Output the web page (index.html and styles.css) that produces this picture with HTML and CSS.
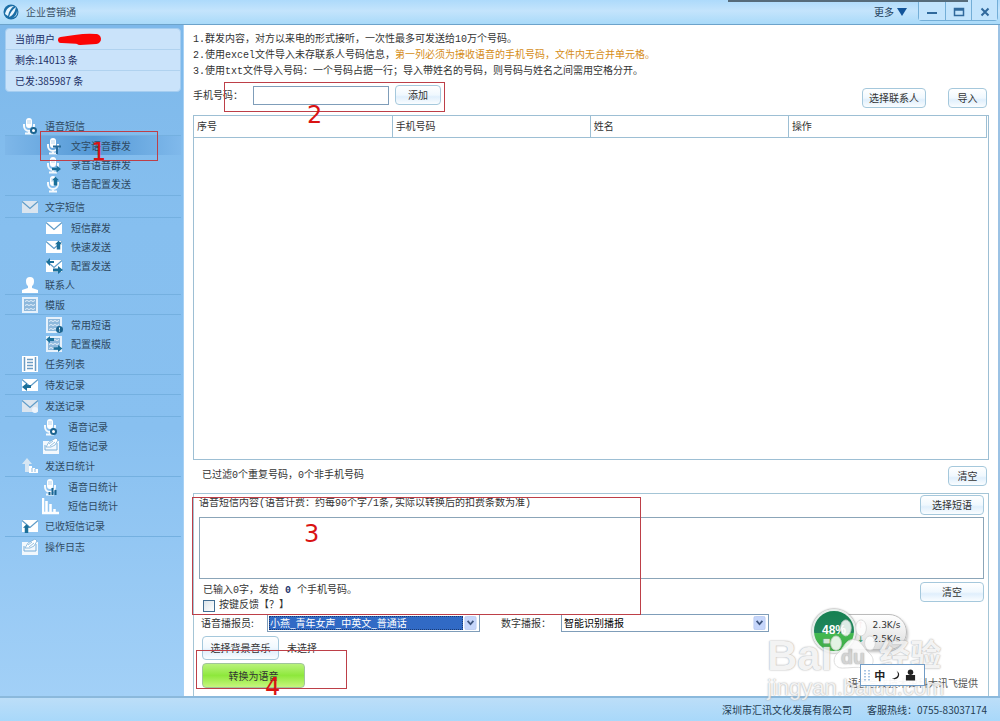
FILE: index.html
```html
<!DOCTYPE html>
<html lang="zh-CN">
<head>
<meta charset="utf-8">
<title>企业营销通</title>
<link rel="stylesheet" href="styles.css">
</head>
<body>
<svg class="defs" aria-hidden="true">
  <defs>
    <symbol id="mic" viewBox="0 0 18 18"><rect x="5" y="1" width="6" height="10" rx="3" fill="#fff"/><path d="M6 4h4M6 6h4" stroke="#b9d6ee"/><path d="M3 7v2a5 5 0 0 0 10 0V7M8 14v2M4 16.500h8" fill="none" stroke="#f4f9fd" stroke-width="2"/></symbol>
    <symbol id="mail" viewBox="0 0 18 18"><path d="M1 3h16v12H1z" fill="currentColor"/><path d="M1 3.500l8 7 8-7" fill="none" stroke="#5f9cc8" stroke-width="1.200"/></symbol>
    <symbol id="right" viewBox="0 0 10 8"><path d="M0 2.500h5V0l5 4-5 4V5.500H0z" fill="#1b6f99"/></symbol>
    <symbol id="up" viewBox="0 0 8 10"><path d="M4 0l4 4H6v6H2V4H0z" fill="#1b6f99"/></symbol>
    <symbol id="form" viewBox="0 0 18 18"><path d="M1 1h16v16H1z" fill="#e6f1fb"/><path d="M3 3h12v12H3z" fill="#8db8dc"/><path d="M4 5.500l2-1 2 1 2-1 2 1 2-1M4 9.500l2-1 2 1 2-1 2 1 2-1M4 13.500l2-1 2 1 2-1 2 1 2-1" fill="none" stroke="#e6f1fb"/></symbol>
    <symbol id="note" viewBox="0 0 18 18"><path d="M1 4h16v13H1z" fill="#f2f8fd"/><path d="M3 8v5h12V6" fill="none" stroke="#78aed8"/><path d="M4 10l3-5 7-4 2 2-3 5-4 2zM7 7l4-3M8 9l5-4" fill="#fff" stroke="#78aed8" stroke-width=".8"/></symbol>
    <symbol id="caret" viewBox="0 0 15 17"><rect x=".5" y=".5" width="14" height="16" rx="2" fill="#c6d6fb" stroke="#b5c7ef"/><path d="M4 6l3.500 4L11 6" fill="none" stroke="#3f567f" stroke-width="2.200"/></symbol>
  </defs>
</svg>
<div class="window">
  <header class="titlebar">
    <svg class="logo" viewBox="0 0 16 16"><circle cx="8" cy="8" r="7.500" fill="#1c6ea6"/><path d="M2 10C3 5 6 2 11 2 8 4 6 7 5 12zM6 13c1-4 3-7 7-10-1 4-2 8-7 10zM9 14c3-1 5-4 5-7 1 3-1 6-5 7z" fill="#e9f6ff"/></svg>
    <h1 class="app-name">企业营销通</h1>
    <button class="more" type="button">更多<svg viewBox="0 0 10 8"><path d="M0 0h10L5 8z" fill="#12549a"/></svg></button>
    <div class="controls">
      <button type="button" aria-label="最小化"><svg viewBox="0 0 12 10"><path d="M1 6h10" stroke="#30699c" stroke-width="2"/></svg></button>
      <button type="button" aria-label="最大化"><svg viewBox="0 0 12 10"><path d="M1.500 1.500h9v7h-9zM1 3h10" fill="none" stroke="#30699c" stroke-width="1.500"/></svg></button>
      <button type="button" aria-label="关闭"><svg viewBox="0 0 12 10"><path d="M2.500 1.500l7 7m0-7l-7 7" stroke="#30699c" stroke-width="2"/></svg></button>
    </div>
    <div class="edge"></div>
  </header>

  <div class="body">
    <aside class="sidebar">
      <div class="account">
        <p>当前用户<svg class="scribble" viewBox="0 0 48 13"><path d="M6 7L20 5Q33 3 40 4Q43 6 39 8L26 8L7 7" fill="none" stroke="#fb0404" stroke-width="6" stroke-linecap="round" stroke-linejoin="round"/><path d="M25 7L41 6" stroke="#fb0404" stroke-width="10" stroke-linecap="round"/></svg></p>
        <p>剩余:14013 条</p>
        <p>已发:385987 条</p>
      </div>
      <nav>
        <ul class="menu">
          <li><a class="head" href="#"><svg viewBox="0 0 18 18"><use href="#mic"/><circle cx="12.500" cy="13.500" r="2.500" fill="#fff" stroke="#1b6490" stroke-width="2"/></svg>语音短信</a>
            <ul class="sub ruled">
              <li><a class="active" href="#"><svg viewBox="0 0 18 18"><use href="#mic"/><path d="M8 9.500h8M12 9v8" stroke="#286b99" stroke-width="2"/></svg>文字语音群发</a></li>
              <li><a href="#"><svg viewBox="0 0 18 18"><use href="#mic"/><use href="#right" x="7" y="9" width="9" height="8"/></svg>录音语音群发</a></li>
              <li><a href="#"><svg viewBox="0 0 18 18"><use href="#mic"/><use href="#up" x="7" y="1" width="7" height="10"/></svg>语音配置发送</a></li>
            </ul></li>
          <li><a class="head tall" href="#"><svg class="muted" viewBox="0 0 18 18"><use href="#mail"/></svg>文字短信</a>
            <ul class="sub">
              <li><a href="#"><svg viewBox="0 0 18 18"><use href="#mail"/></svg>短信群发</a></li>
              <li><a href="#"><svg viewBox="0 0 18 18"><use href="#mail"/><use href="#up" x="10" y="2" width="7" height="10"/></svg>快速发送</a></li>
              <li><a href="#"><svg viewBox="0 0 18 18"><use href="#mail"/><use href="#right" x="8" y="9" width="10" height="8"/><path d="M9 4H5V1L1 5l4 4V6h4z" fill="#1b6f99"/></svg>配置发送</a></li>
            </ul></li>
          <li><a class="head" href="#"><svg viewBox="0 0 18 18"><path d="M5 5Q5 1 9 1t4 4q0 4-2 5v2l6 2v3H1v-3l6-2v-2Q5 9 5 5z" fill="#fff"/></svg>联系人</a></li>
          <li><a class="head" href="#"><svg viewBox="0 0 18 18"><use href="#form"/></svg>模版</a>
            <ul class="sub">
              <li><a href="#"><svg viewBox="0 0 18 18"><use href="#form"/><circle cx="14.500" cy="13.500" r="3.500" fill="#1b6490"/><path d="M14.500 11.500v2m0 1v1" stroke="#fff"/></svg>常用短语</a></li>
              <li><a href="#"><svg viewBox="0 0 18 18"><use href="#form"/><use href="#right" x="8" y="10" width="10" height="7"/><path d="M9 3H5V1L1 4.500 5 8V6h4z" fill="#1b6f99"/></svg>配置模版</a></li>
            </ul></li>
          <li><a class="head tall" href="#"><svg viewBox="0 0 18 18"><path d="M1 1h16v16H1z" fill="#fff"/><path d="M3.500 2v14m11-14v14M6 4.500h6m-6 3h6m-6 3h6m-6 3h6" stroke="#6d9dc4" stroke-width="1.500"/></svg>任务列表</a></li>
          <li><a class="head" href="#"><svg viewBox="0 0 18 18"><use href="#mail"/><path d="M10 9H6V7l-5 4 5 4v-3h4z" fill="#1b6f99"/></svg>待发记录</a></li>
          <li><a class="head tall" href="#"><svg class="muted" viewBox="0 0 18 18"><use href="#mail"/><circle cx="14" cy="13" r="3" fill="#eef5fc"/></svg>发送记录</a>
            <ul class="sub near">
              <li><a href="#"><svg viewBox="0 0 18 18"><use href="#mic"/><circle cx="11.500" cy="13.500" r="2.500" fill="#fff" stroke="#1b6490" stroke-width="2"/></svg>语音记录</a></li>
              <li><a href="#"><svg viewBox="0 0 18 18"><use href="#note"/></svg>短信记录</a></li>
            </ul></li>
          <li><a class="head tall" href="#"><svg viewBox="0 0 18 18"><path d="M6 1l5 6H8v8H4V7H1z" fill="#d7e6f3"/><path d="M8 16V9h3v2h3v1h3v4z" fill="#fff"/><path d="M11 11v4m3-3v3" stroke="#8bb9df"/></svg>发送日统计</a>
            <ul class="sub near">
              <li><a href="#"><svg viewBox="0 0 18 18"><use href="#mic"/><path d="M7.500 17v-3m3 3v-7m3 7v-5" stroke="#1b6490" stroke-width="2"/></svg>语音日统计</a></li>
              <li><a href="#"><svg viewBox="0 0 18 18"><path d="M1 1v15h16M4.500 15V4m4 11V7m4 8v-3" fill="none" stroke="#fff" stroke-width="2.500"/></svg>短信日统计</a></li>
            </ul></li>
          <li><a class="head tall" href="#"><svg viewBox="0 0 18 18"><use href="#mail"/><use href="#up" x="2" y="7" width="7" height="9"/></svg>已收短信记录</a></li>
          <li><a class="head last" href="#"><svg viewBox="0 0 18 18"><use href="#note"/></svg>操作日志</a></li>
        </ul>
      </nav>
    </aside>

    <main class="main">
      <div class="tips">
        <p>1.群发内容，对方以来电的形式接听，一次性最多可发送给10万个号码。</p>
        <p>2.使用excel文件导入未存联系人号码信息，<em>第一列必须为接收语音的手机号码，文件内无合并单元格。</em></p>
        <p>3.使用txt文件导入号码：一个号码占据一行；导入带姓名的号码，则号码与姓名之间需用空格分开。</p>
      </div>
      <div class="add-row">
        <label for="phone">手机号码：</label>
        <input id="phone" class="phone" type="text">
        <button class="btn small" type="button">添加</button>
        <div class="right">
          <button class="btn wide" type="button">选择联系人</button>
          <button class="btn narrow" type="button">导入</button>
        </div>
      </div>
      <div class="grid">
        <table>
          <thead><tr><th>序号</th><th>手机号码</th><th>姓名</th><th>操作</th></tr></thead>
        </table>
      </div>
      <div class="status">
        <span>已过滤0个重复号码，0个非手机号码</span>
        <button class="btn narrow" type="button">清空</button>
      </div>
      <section class="compose">
        <div class="compose-head">
          <label for="content">语音短信内容(语音计费：约每90个字/1条,实际以转换后的扣费条数为准)</label>
          <button class="btn wide" type="button">选择短语</button>
        </div>
        <textarea id="content" class="content"></textarea>
        <div class="meta">
          <div class="meta-text">
            <p>已输入0字，发给 <b>0</b> 个手机号码。</p>
            <label class="check"><input type="checkbox">按键反馈【？】</label>
          </div>
          <button class="btn wide" type="button">清空</button>
        </div>
        <div class="voice">
          <label class="voice-label" for="voice">语音播报员:</label>
          <div class="combo selected"><select id="voice"><option>小燕_青年女声_中英文_普通话</option></select><svg viewBox="0 0 15 17"><use href="#caret"/></svg></div>
          <label class="digit-label" for="digit">数字播报：</label>
          <div class="combo"><select id="digit"><option>智能识别播报</option></select><svg viewBox="0 0 15 17"><use href="#caret"/></svg></div>
        </div>
        <div class="music"><button class="btn music-btn" type="button">选择背景音乐</button><span>未选择</span></div>
        <div class="submit">
          <button class="btn convert" type="button">转换为语音</button>
          <span>语音合成技术由科大讯飞提供</span>
        </div>
      </section>
    </main>
  </div>

  <footer class="footer"><span>深圳市汇讯文化发展有限公司</span><span>客服热线：0755-83037174</span></footer>

  <div class="speed">
    <div class="rates"><span><i class="rise">↑</i>2.3K/s</span><span><i class="fall">↓</i>2.5K/s</span></div>
    <div class="ball">48%</div>
  </div>
  <div class="ime">
    <svg class="grip" viewBox="0 0 6 12"><path d="M1 1v11M5 1v11" stroke="#8fb4da" stroke-width="1.500" stroke-dasharray="1.500 1.500"/></svg>
    <span>中</span>
    <svg viewBox="0 0 12 12"><path d="M7 1q5 7-5 9 7 2 8-4 0-3-3-5z" fill="#222"/></svg>
    <svg viewBox="0 0 12 12"><circle cx="6" cy="3" r="3" fill="#222"/><path d="M1 12V6h10v6z" fill="#222"/></svg>
  </div>
  <div class="watermark">
    <div class="brand"><span>Bai</span><svg viewBox="0 0 56 60"><g fill="#fff" stroke="#d3d3d3"><ellipse cx="9" cy="29" rx="6" ry="8"/><ellipse cx="20" cy="12" rx="6" ry="9"/><ellipse cx="37" cy="12" rx="6" ry="9"/><ellipse cx="47" cy="29" rx="6" ry="8"/><path d="M28 25c-9 0-10 10-17 15-7 6-5 17 5 17 8 0 16-2 24 0 10 1 14-9 7-16-7-5-9-16-19-16z"/></g><text class="paw-text" x="28" y="52" text-anchor="middle">du</text></svg><span class="cn">经验</span></div>
    <div class="domain">jingyan.baidu.com</div>
  </div>

  <div class="mark mark-one"></div><span class="num num-one">1</span>
  <div class="mark mark-two"></div><span class="num num-two">2</span>
  <div class="mark mark-three"></div><span class="num num-three">3</span>
  <div class="mark mark-four"></div><span class="num num-four">4</span>
</div>
</body>
</html>
```
FILE: styles.css
```css
* { box-sizing: border-box; }
body, p, h1, ul { margin: 0; padding: 0; }
ul { list-style: none; }
body {
  font: 10px/16px "Noto Sans CJK SC", "Liberation Sans", sans-serif;
  color: #333;
}
button, input, select, textarea { font: inherit; color: inherit; margin: 0; }
svg { display: block; flex: none; }
.defs { position: absolute; width: 0; height: 0; }
.window { position: relative; display: flex; flex-direction: column; min-height: 100vh; overflow: hidden; }

.titlebar {
  position: relative;
  display: flex;
  align-items: center;
  height: 25px;
  padding: 0 2px 0 3px;
  background: linear-gradient(#addafb, #c4e4fc 45%, #a9daf9);
  border-bottom: 1px solid #6ca3cb;
}
.logo { width: 16px; height: 16px; }
.app-name { flex: 1; margin-left: 7px; font-size: 10px; font-weight: normal; color: #3b5268; }
.more { display: flex; align-items: center; gap: 3px; padding: 0; margin-right: 11px; border: 0; background: none; color: #24425e; }
.more svg { width: 10px; height: 8px; }
.controls { display: flex; align-self: flex-start; height: 21px; border: 1px solid #73aed7; border-top: 0; border-radius: 0 0 4px 4px; }
.controls button { display: flex; align-items: center; justify-content: center; width: 26px; padding: 3px 0 0; border: 0; background: #c3e4fc; }
.controls button + button { border-left: 1px solid #73aed7; }
.controls svg { width: 12px; height: 10px; }
.edge { position: absolute; top: 0; right: 32px; width: 240px; height: 2px; background: #566b7a; }

.body { display: flex; flex: 1; border-right: 2px solid #9cc2e4; }
.sidebar { width: 184px; flex: none; padding: 3px 2px 0 5px; background: linear-gradient(#7db8ea, #86bfef 30%, #88c0f0 60%, #a2d0f7); border-right: 1px solid #a7d1f4; }
.account { height: 64px; margin-bottom: 24px; border: 1px solid #a5cdf0; border-radius: 4px; background: #cae3fa; color: #1b2f66; }
.account p { display: flex; align-items: center; height: 20px; padding-left: 9px; }
.account p + p { height: 21px; border-top: 1px solid #b0d2ef; }
.scribble { width: 48px; height: 13px; }
.menu a { display: flex; align-items: center; color: #2f4a63; text-decoration: none; }
.menu svg { width: 18px; height: 18px; color: #fff; }
.menu .muted { color: #dbe5ef; }
.menu .head { gap: 6px; height: 20px; padding-left: 16px; border-bottom: 1px solid #74b0e0; }
.menu .tall { height: 22px; }
.menu .last { border: 0; }
.sub a { gap: 8px; height: 19px; padding-left: 40px; }
.near a { padding-left: 37px; }
.ruled { padding-bottom: 2px; border-bottom: 1px solid #74b0e0; }
.sub .active { background: linear-gradient(90deg, #7eb7e9, #5499d6 50%, #80b9eb); }

.main { display: flex; flex-direction: column; flex: 1; min-width: 0; padding: 6px 9px 0; background: #fff; }
.tips, .status span, .compose-head label, .meta-text { font-family: "Liberation Mono", "Noto Sans CJK SC", monospace; }
.tips { height: 49px; padding-top: 1px; line-height: 16px; }
.tips em { font-style: normal; color: #d58c17; }
.add-row { display: flex; align-items: center; height: 35px; padding: 0 2px 5px 0; }
.add-row label { width: 60px; }
.phone { width: 136px; height: 19px; margin-right: 6px; padding: 0 3px; border: 1px solid #7f9db9; }
.right { display: flex; align-self: flex-end; gap: 22px; margin: 0 0 2px auto; }
.btn { height: 20px; padding: 0; border: 1px solid #a5c8dc; border-radius: 4px; background: linear-gradient(#fff, #f0f8fe 50%, #e0effc 60%, #fafdff); line-height: 16px; }
.small { width: 46px; }
.wide { width: 64px; }
.narrow { width: 39px; }
.grid { flex: 1; border: 1px solid #9dbfd4; padding-right: 1px; }
.grid table { width: 100%; table-layout: fixed; border-collapse: collapse; }
.grid th { height: 21px; padding: 0 3px; border-bottom: 1px solid #9dbfd4; border-right: 1px solid #9dbfd4; font-weight: normal; text-align: left; }
.status { display: flex; align-items: center; justify-content: space-between; height: 33px; padding: 0 2px 2px 9px; }

.compose { display: flex; flex-direction: column; height: 203px; padding: 1px 4px 0 5px; border: 1px solid #a4c5d6; border-bottom: 0; }
.compose-head, .meta { display: flex; align-items: flex-start; justify-content: space-between; }
.compose-head { height: 22px; }
.compose-head label { padding-top: 1px; }
.content { display: block; width: 100%; height: 62px; border: 1px solid #8ba5b8; resize: none; }
.meta { height: 35px; padding: 3px 0 0 4px; }
.meta-text { padding-top: 1px; line-height: 15px; }
.meta b { color: #25366d; }
.check { display: flex; align-items: center; gap: 4px; }
.check input { appearance: none; width: 12px; height: 12px; border: 1px solid #426d92; background: linear-gradient(135deg, #dce4ea, #fff); }
.voice { display: flex; align-items: center; height: 18px; padding-left: 2px; }
.voice-label { width: 66px; }
.combo { display: flex; width: 213px; height: 18px; padding: 1px; border: 1px solid #7f9db9; background: #fff; }
.combo select { flex: 1; min-width: 0; padding: 0 1px; border: 0; appearance: none; background: #fff; color: #000; line-height: 14px; }
.combo svg { width: 15px; height: 14px; }
.selected select { background: #316ac5; color: #fff; outline: 1px dotted #1c3a70; outline-offset: -1px; }
.digit-label { width: 60px; margin-left: 21px; }
.digit-label + .combo { width: 208px; }
.music { display: flex; align-items: center; gap: 8px; margin-top: 4px; padding-left: 3px; }
.music-btn { width: 77px; height: 24px; }
.submit { display: flex; align-items: flex-start; justify-content: space-between; margin-top: 3px; padding: 0 6px 0 3px; }
.submit span { padding-top: 12px; color: #555; }
.convert { width: 103px; height: 25px; border-color: #a1c59b; background: linear-gradient(#b9f27b, #8ee83c 50%, #c6f67d); }
.footer { display: flex; align-items: center; justify-content: flex-end; gap: 15px; height: 25px; padding-right: 13px; border-top: 2px solid #8bb9dc; background: linear-gradient(#bcdef8, #a8d8fa); color: #243c52; }

.speed { position: absolute; right: 93px; bottom: 66px; display: flex; align-items: center; width: 95px; height: 46px; color: #333; font-family: "DejaVu Sans", sans-serif; font-size: 9px; }
.rates { display: flex; flex-direction: column; flex: 1; margin-left: 20px; padding: 3px 6px 3px 24px; border: 1px solid #bbb; border-radius: 18px; background: linear-gradient(#fff, #ddd); line-height: 14px; box-shadow: 1px 2px 3px #bbb; }
.rates span { display: flex; gap: 8px; }
.rates i { font-style: normal; }
.rise { color: #d99; }
.fall { color: #2d965a; }
.ball { position: absolute; left: 0; top: 0; width: 44px; height: 44px; border: 2px solid #e6eeea; border-radius: 50%; background: linear-gradient(#168052, #23865c 55%, #44b951 56%, #3cab45); box-shadow: 0 0 2px #555; color: #fff; font: bold 12px/38px "Liberation Sans", sans-serif; text-align: center; }
.ime { position: absolute; right: 75px; bottom: 35px; z-index: 2; display: flex; align-items: center; justify-content: space-between; width: 65px; height: 22px; padding: 0 8px 0 3px; border: 1px solid #719cc6; background: #fffffff0; color: #222; font-size: 11px; font-weight: bold; }
.ime svg { width: 11px; height: 12px; }
.ime .grip { width: 6px; }
.watermark { position: absolute; right: 54px; bottom: 21px; width: 179px; color: #ffffffd9; font-family: "Liberation Sans", "Noto Sans CJK SC", sans-serif; opacity: .85; text-shadow: 0 0 2px #aaa, 0 0 1px #aaa; }
.brand { display: flex; align-items: flex-end; height: 60px; margin-bottom: 3px; font-size: 42px; font-weight: bold; line-height: 34px; }
.brand svg { width: 50px; height: 58px; margin-left: -4px; }
.brand .cn { margin-left: 1px; font-size: 31px; }
.paw-text { font-size: 22px; font-weight: bold; fill: #ccc; }
.domain { font-size: 22px; line-height: 24px; }

.mark { position: absolute; z-index: 3; border: 1px solid #bd3f48; pointer-events: none; }
.mark-one { left: 40px; top: 131px; width: 118px; height: 30px; }
.mark-two { left: 224px; top: 82px; width: 221px; height: 30px; }
.mark-three { left: 192px; top: 497px; width: 449px; height: 118px; }
.mark-four { left: 196px; top: 650px; width: 151px; height: 39px; }
.num { position: absolute; z-index: 4; color: #d91313; font: 24px/24px "DejaVu Sans", sans-serif; }
.num-one { left: 91px; top: 140px; }
.num-two { left: 307px; top: 103px; }
.num-three { left: 304px; top: 522px; }
.num-four { left: 265px; top: 675px; }
```
